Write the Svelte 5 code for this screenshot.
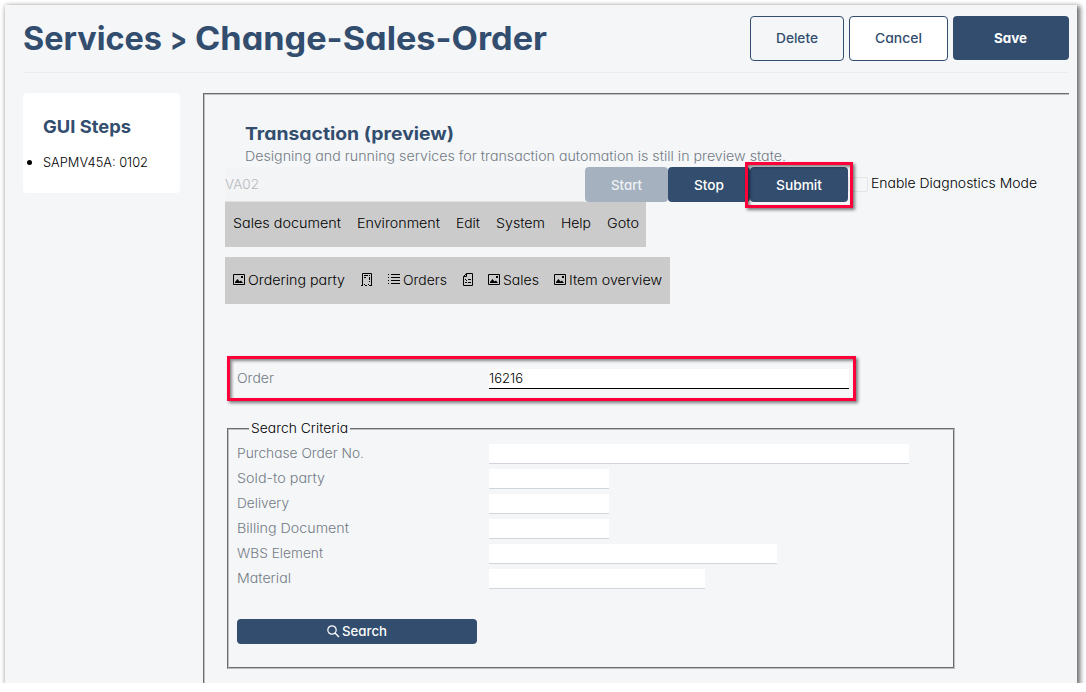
<script>
  function fit(node, width) {
    const natural = node.getBoundingClientRect().width;
    node.style.transform = `scaleX(${width / natural})`;
    node.style.marginRight = `${width - natural}px`;
  }

  const menu = [
    ['Sales document', 108],
    ['Environment', 83],
    ['Edit', 24],
    ['System', 49],
    ['Help', 30],
    ['Goto', 32]
  ];
  const tools = [
    { icon: 'image', label: 'Ordering party', width: 97 },
    { icon: 'receipt' },
    { icon: 'list', label: 'Orders', width: 44 },
    { icon: 'sheet' },
    { icon: 'image', label: 'Sales', width: 36 },
    { icon: 'image', label: 'Item overview', width: 93 }
  ];
  const fields = [
    ['Purchase Order No.', 127, 420],
    ['Sold-to party', 88, 120],
    ['Delivery', 52, 120],
    ['Billing Document', 112, 120],
    ['WBS Element', 86, 288],
    ['Material', 54, 216]
  ];
</script>

{#snippet icon(name)}
  <svg class="icon {name}" width="13" height="14" viewBox="0 0 13 14" fill="none" stroke="#000">
    {#if name === 'image'}
      <path d="M.5 1.500h11v10H.5z" />
      <path d="M2 10V9l2.500-3L6.500 8.500 8 7.500l2 2.500z" fill="#000" stroke="none" />
      <path d="M8 3h2v2H8z" fill="#000" stroke="none" />
    {:else if name === 'receipt'}
      <path d="M2.500 12V.5h9V12M1 12.500h2M4 11.500h1M5 12.500h2M8 11.500h1M9 12.500h3" />
      <path d="M4 2.500h4M4 4.500h2M9.500 2v1M9.500 4v3M9.500 8v1" />
    {:else if name === 'list'}
      <path d="M3 1.500h9M3 4.500h9M3 7.500h9M3 10.500h9" />
      <path d="M0 1.500h1M0 4.500h1M0 7.500h1M0 10.500h1" />
    {:else}
      <path d="M4.500.5h6v12h-9v-9zM4.500.5v3h-3" />
      <path d="M3 6.500h1M4 7.500h1M6 6.500h3M3 9.500h2M6 9.500h3" />
    {/if}
  </svg>
{/snippet}

<div class="window">
  <header>
    <h1><span use:fit={139}>Services</span><span use:fit={17}>&gt;</span><span use:fit={352}>Change-Sales-Order</span></h1>
    <div class="actions">
      <button class="delete"><span use:fit={42}>Delete</span></button>
      <button class="cancel"><span use:fit={47}>Cancel</span></button>
      <button class="save"><span use:fit={33}>Save</span></button>
    </div>
  </header>

  <div class="body">
    <aside>
      <h2 use:fit={88}>GUI Steps</h2>
      <div class="step"><i></i><span use:fit={105}>SAPMV45A: 0102</span></div>
    </aside>

    <main>
      <div class="intro">
        <h2 use:fit={209}>Transaction (preview)</h2>
        <p use:fit={541}>Designing and running services for transaction automation is still in preview state.</p>
      </div>

      <div class="runbar">
        <div class="code"><span use:fit={34}>VA02</span></div>
        <button class="start"><span use:fit={31}>Start</span></button>
        <button class="stop"><span use:fit={30}>Stop</span></button>
        <button class="submit"><span use:fit={46}>Submit</span><b class="mark"></b></button>
        <div class="check"></div>
        <span class="diag" use:fit={166}>Enable Diagnostics Mode</span>
      </div>

      <nav class="menu">
        {#each menu as [label, width]}<span use:fit={width}>{label}</span>{/each}
      </nav>

      <nav class="tools">
        {#each tools as tool}
          <div class="tool">
            {@render icon(tool.icon)}
            {#if tool.label}<span use:fit={tool.width}>{tool.label}</span>{/if}
          </div>
        {/each}
      </nav>

      <div class="order">
        <div class="label"><span use:fit={37}>Order</span></div>
        <div class="field active"><span use:fit={34}>16216</span></div>
      </div>

      <fieldset>
        <legend><span use:fit={97}>Search Criteria</span></legend>
        {#each fields as [label, width, size]}
          <div class="row">
            <div class="label"><span use:fit={width}>{label}</span></div>
            <div class="field" style:width="{size}px"></div>
          </div>
        {/each}
        <button class="search">
          <svg width="13" height="13" viewBox="0 0 13 13" fill="none" stroke="#fff" stroke-width="1.200">
            <circle cx="5" cy="5" r="4.200" /><path d="M8 8l4 4" stroke-width="1.500" />
          </svg>
          <span use:fit={45}>Search</span>
        </button>
      </fieldset>
    </main>
  </div>
</div>

<style>
  :global(body) { margin: 0; background: #fff; overflow: hidden; }
  :global(#app) { display: flow-root; }
  * { box-sizing: border-box; }
  .window {
    margin: 5px 0 0 5px; width: 1072px; height: 678px; padding: 0 8px 0 18px;
    background: #f4f6f8; box-shadow: 2px 2px 5px 1px rgba(0, 0, 0, .6);
    font: 350 13px/20px Inter, "Open Sans", sans-serif;
    font-feature-settings: "cv11"; color: #000;
    display: flex; flex-direction: column;
  }
  span, h2, p { display: inline-block; white-space: nowrap; margin: 0; flex: none; transform-origin: 0 50%; }
  header { height: 68px; flex: none; display: flex; justify-content: space-between; align-items: flex-start; border-bottom: 1px solid #ebedef; }
  h1 { display: flex; gap: 8px; font-size: 32px; line-height: 40px; font-weight: 700; color: #324d6e; margin: 14px 0 0; }
  h2 { font-size: 18px; line-height: 24px; font-weight: 700; color: #324d6e; }
  .actions { display: flex; gap: 5px; padding-top: 11px; }
  button {
    font: inherit; font-feature-settings: inherit; font-weight: 500; color: #fff; background: #324d6e; border: 0; padding: 0; margin: 0;
    border-radius: 4px; display: flex; align-items: center; justify-content: center; flex: none;
  }
  .delete, .cancel { height: 45px; border: 1px solid #324d6e; color: #324d6e; background: #f4f6f8; padding-bottom: 1px; }
  .delete { width: 94px; }
  .cancel { width: 99px; background: #fff; padding-right: 1px; }
  .save { width: 116px; height: 44px; font-weight: 700; padding-right: 1px; }
  .body { display: flex; flex: 1; gap: 23px; padding-top: 20px; align-items: stretch; }
  aside { width: 157px; height: 100px; background: #fff; border-radius: 4px; padding: 22px 0 0 20px; flex: none; }
  .step { display: flex; align-items: center; margin: 13px 0 0 -16px; }
  .step i { width: 5px; height: 5px; border-radius: 50%; background: #000; margin-right: 11px; }
  main {
    flex: 1; border: 2px groove #c0c0c0; border-right: 0; border-bottom: 0;
    padding: 27px 0 0 20px; display: flex; flex-direction: column; align-items: flex-start;
  }
  .intro { height: 45px; padding-left: 20px; display: flex; flex-direction: column; align-items: flex-start; }
  .intro p { color: #737b84; line-height: 20px; }
  .runbar { height: 35px; display: flex; align-items: center; }
  .code { width: 360px; height: 35px; background: #f3f4f6; border-bottom: 1px solid #e1e4e6; color: #b7b9bb; line-height: 34px; }
  .code span { line-height: 34px; }
  .start, .stop, .submit { height: 35px; }
  .start { width: 83px; background: #a6b1c0; color: #eef1f5; }
  .stop { width: 82px; }
  .submit { width: 98px; position: relative; z-index: 1; }
  .mark { position: absolute; left: -5px; top: -5px; width: 108px; height: 46px; }
  .mark, .order {
    border: 3px solid #fc0039;
    box-shadow: 2px 2px 3px rgba(0, 0, 0, .5), inset 2px 2px 3px rgba(0, 0, 0, .45);
  }
  .check { width: 20px; height: 15px; border: 1px solid #e4e6e8; border-radius: 2px; }
  .diag { margin: 0 0 3px 3px; }
  .menu, .tools { background: #cbcbcb; display: flex; align-items: center; gap: 16px; }
  .menu { width: 421px; height: 45px; padding: 0 8px 3px; }
  .tools { width: 445px; height: 47px; margin-top: 10px; padding: 0 8px 1px; gap: 15px; }
  .tool { display: flex; align-items: center; gap: 2px; }
  .icon { display: block; flex: none; }
  .icon.sheet { margin-right: -2px; }
  .order { width: 629px; height: 45px; margin: 52px 0 0 2px; padding: 10px 0 0 7px; display: flex; }
  .label { width: 252px; color: #737b84; flex: none; line-height: 18px; }
  .label span, .field span { line-height: 18px; display: block; width: max-content; }
  .field { height: 20px; background: #fff; border-bottom: 1px solid #d0d6db; line-height: 18px; }
  .field.active { width: 360px; border-color: #000; }
  fieldset { width: 728px; height: 250px; margin: 18px 0 0 2px; padding: 5px 0 0 8px; border: 2px groove #c0c0c0; }
  legend { margin-left: 12px; padding: 0 2px; height: 20px; line-height: 20px; }
  legend span { display: block; line-height: 19px; }
  .row { display: flex; height: 25px; }
  .search { width: 240px; height: 25px; margin-top: 25px; padding-bottom: 1px; gap: 2px; }
</style>
